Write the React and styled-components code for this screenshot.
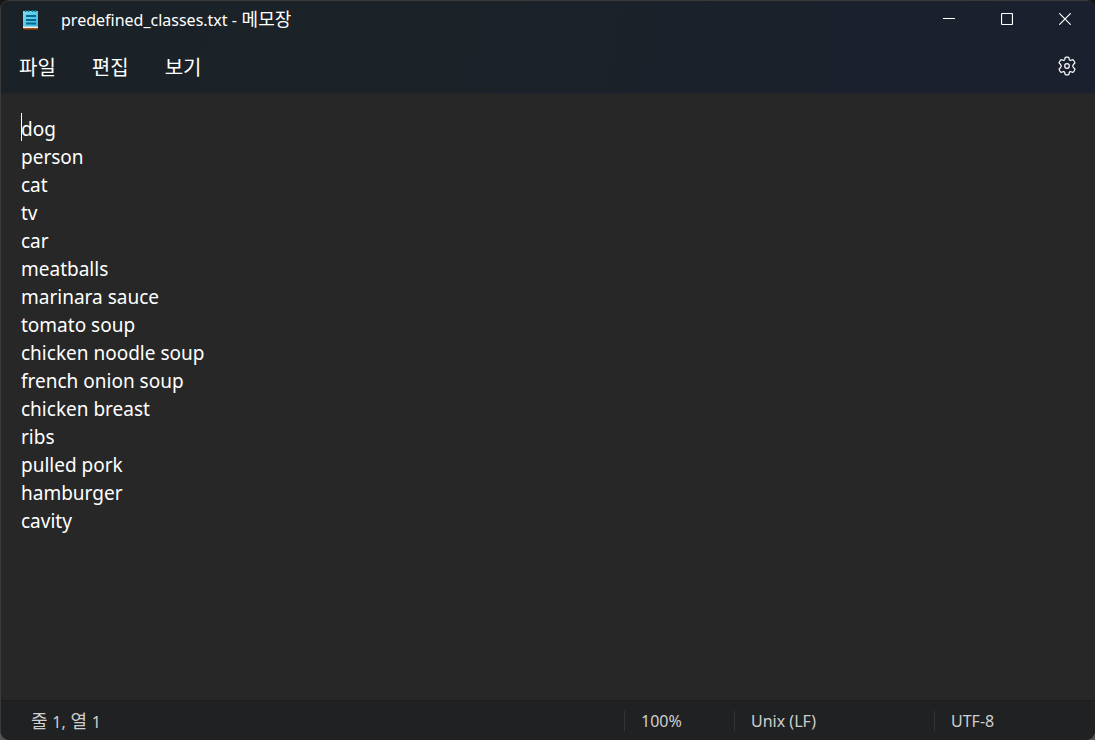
import React, { useState } from 'react';
import styled, { createGlobalStyle, ThemeProvider } from 'styled-components';

const darkTheme = {
  colors: {
    header: 'linear-gradient(100deg, #1b2227 0%, #1b2228 40%, #1a202e 100%)',
    body: '#272727',
    status: '#202122',
    border: '#3a3a3b',
    divider: '#343536',
  },
  fontColor: '#ffffff',
  mutedColor: '#cfcfcf',
};

const GlobalStyles = createGlobalStyle`
  * {
    box-sizing: border-box;
  }

  body {
    margin: 0;
    background: linear-gradient(#161616, #555555);
    font-family: 'Noto Sans', 'Noto Sans CJK KR', sans-serif;
  }
`;

const Window = styled.div`
  display: flex;
  flex-direction: column;
  height: 100vh;
  overflow: hidden;
  border-top: 1px solid ${props => props.theme.colors.border};
  border-left: 1px solid ${props => props.theme.colors.border};
  border-radius: 9px;
  background: ${props => props.theme.colors.body};
  color: ${props => props.theme.fontColor};
`;

const Header = styled.header`
  background: ${props => props.theme.colors.header};
`;

const TitleBar = styled.div`
  display: flex;
  align-items: center;
  height: 38px;
  padding-left: 20px;
`;

const Title = styled.h1`
  flex: 1;
  margin: 0 0 0 20px;
  font-size: 16px;
  font-weight: 400;
  line-height: 24px;
`;

// Hangul is set a little larger than the latin text around it
const Hangul = styled.span`
  font-size: 18px;
  line-height: 20px;
`;

const WindowControls = styled.div`
  display: flex;
  align-self: flex-start;
  padding-right: 1px;
`;

const IconButton = styled.button`
  display: flex;
  align-items: center;
  justify-content: center;
  width: ${props => props.$width};
  height: 36px;
  padding: 0;
  border: none;
  background: transparent;
  color: inherit;
`;

const MenuBar = styled.nav`
  display: flex;
  align-items: center;
  height: 54px;
  padding-right: 7px;
`;

const MenuButton = styled.button`
  padding: 2px 18px 0;
  border: none;
  background: transparent;
  color: inherit;
  font-family: 'Noto Sans CJK KR', sans-serif;
  font-size: 20px;
  line-height: 32px;
`;

const Spacer = styled.div`
  flex: 1;
`;

const Editor = styled.main`
  position: relative;
  display: flex;
  flex: 1;
  border-top: 1px solid #222425;
`;

const TextArea = styled.textarea`
  flex: 1;
  padding: 21px 20px;
  border: none;
  outline: none;
  resize: none;
  background: transparent;
  color: inherit;
  caret-color: transparent;
  font-family: inherit;
  font-size: 19px;
  line-height: 28px;
`;

const Caret = styled.span`
  position: absolute;
  top: 19px;
  left: 20px;
  width: 1px;
  height: 28px;
  background: #ffffff;
`;

const StatusBar = styled.footer`
  display: flex;
  align-items: center;
  height: 40px;
  padding-top: 1px;
  border-top: 1px solid #1c1c1c;
  background: ${props => props.theme.colors.status};
  color: ${props => props.theme.mutedColor};
  font-size: 16px;
  line-height: 20px;
`;

const Position = styled.div`
  flex: 1;
  padding-left: 30px;
`;

const StatusItem = styled.div`
  width: ${props => props.$width};
  padding-left: 16px;
  border-left: 1px solid ${props => props.theme.colors.divider};
`;

const NotepadIcon = () => (
  <svg width="20" height="22" viewBox="0 0 20 22" aria-hidden="true">
    <defs>
      <linearGradient id="paper" x1="0" y1="0" x2="1" y2="1">
        <stop offset="0" stopColor="#83dcf1" />
        <stop offset="1" stopColor="#35b5dc" />
      </linearGradient>
    </defs>
    <path d="M2 18h15v2.500H3.500Q2 20.500 2 19z" fill="#a94c0b" />
    <path d="M2 17h15v2H2z" fill="#f1eee9" />
    <path d="M2 2h15v15.500H2z" fill="url(#paper)" />
    <path d="M4.500 1v2M7.500 1v2M11.500 1v2M14.500 1v2" stroke="#087b9e" strokeWidth="1.500" />
    <path d="M5 7h10M5 11h10M5 14.500h10" stroke="#04698f" strokeWidth="1.800" />
  </svg>
);

const MinimizeIcon = () => (
  <svg width="12" height="12" viewBox="0 0 12 12" aria-hidden="true">
    <path d="M0 5.500h12" stroke="currentColor" />
  </svg>
);

const MaximizeIcon = () => (
  <svg width="12" height="12" viewBox="0 0 12 12" fill="none" aria-hidden="true">
    <rect x=".5" y=".5" width="11" height="11" rx="1" stroke="currentColor" strokeWidth="1.200" />
  </svg>
);

const CloseIcon = () => (
  <svg width="12" height="12" viewBox="0 0 12 12" aria-hidden="true">
    <path d="M.3.3l11.400 11.400M11.700.3L.3 11.700" stroke="currentColor" strokeWidth="1.200" />
  </svg>
);

const SettingsIcon = () => (
  <svg width="20" height="20" viewBox="0 0 20 20" fill="none" stroke="currentColor" strokeWidth="1.200" strokeLinejoin="round" aria-hidden="true">
    <path d="M8.200 1.300Q10 .9 11.800 1.300L12.300 3.500Q12.700 4.500 13.800 4.300L16 3.600Q17.400 5 18 6.900L16.400 8.500Q15 10 16.400 11.500L18 13.100Q17.400 15 16 16.400L13.800 15.700Q12.700 15.500 12.300 16.500L11.800 18.700Q10 19.100 8.200 18.700L7.700 16.500Q7.300 15.500 6.200 15.700L4 16.400Q2.600 15 2 13.100L3.600 11.500Q5 10 3.600 8.500L2 6.900Q2.600 5 4 3.600L6.200 4.300Q7.300 4.500 7.700 3.500Z" />
    <circle cx="10" cy="10" r="2.300" />
  </svg>
);

const classNames = [
  'dog',
  'person',
  'cat',
  'tv',
  'car',
  'meatballs',
  'marinara sauce',
  'tomato soup',
  'chicken noodle soup',
  'french onion soup',
  'chicken breast',
  'ribs',
  'pulled pork',
  'hamburger',
  'cavity',
];

const menus = ['파일', '편집', '보기'];

export default function App() {
  const [text, setText] = useState(classNames.join('\n'));

  return (
    <ThemeProvider theme={darkTheme}>
      <GlobalStyles />
      <Window>
        <Header>
          <TitleBar>
            <NotepadIcon />
            <Title>predefined_classes.txt -<Hangul> 메모장</Hangul></Title>
            <WindowControls>
              <IconButton $width="58px" aria-label="최소화"><MinimizeIcon /></IconButton>
              <IconButton $width="58px" aria-label="최대화"><MaximizeIcon /></IconButton>
              <IconButton $width="58px" aria-label="닫기"><CloseIcon /></IconButton>
            </WindowControls>
          </TitleBar>
          <MenuBar>
            {menus.map((menu) => <MenuButton key={menu}>{menu}</MenuButton>)}
            <Spacer />
            <IconButton $width="42px" aria-label="설정"><SettingsIcon /></IconButton>
          </MenuBar>
        </Header>
        <Editor>
          <TextArea
            aria-label="텍스트 편집기"
            spellCheck={false}
            value={text}
            onChange={(e) => setText(e.target.value)}
          />
          <Caret />
        </Editor>
        <StatusBar>
          <Position><Hangul>줄 </Hangul>1,<Hangul> 열 </Hangul>1</Position>
          <StatusItem $width="110px">100%</StatusItem>
          <StatusItem $width="200px">Unix (LF)</StatusItem>
          <StatusItem $width="161px">UTF-8</StatusItem>
        </StatusBar>
      </Window>
    </ThemeProvider>
  );
}
